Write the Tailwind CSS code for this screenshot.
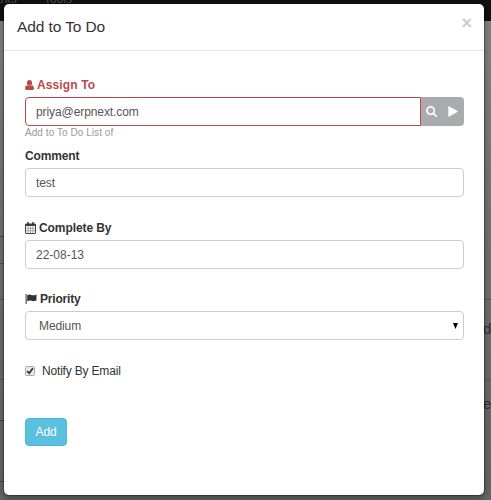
<!DOCTYPE html>
<html lang="en">
<head>
<meta charset="utf-8">
<title>Add to To Do</title>
<script src="https://cdn.jsdelivr.net/npm/@tailwindcss/browser@4"></script>
</head>
<body class="relative h-[500px] w-[491px] overflow-hidden bg-[#747372] font-['Liberation_Sans',Arial,sans-serif] text-[12px] text-[#333]">
  <!-- Dimmed page behind the dialog -->
  <div class="absolute inset-0 bg-linear-to-b from-[#868584] via-[#737271] to-[#666]">
    <div class="h-[21px] bg-[#111]"></div>
    <span class="absolute -left-[6px] -top-[8px] text-[12px] leading-[14px] text-[#4d4d4d]">arks</span>
    <span class="absolute left-[44px] -top-[8px] text-[12px] leading-[14px] text-[#4d4d4d]">Tools</span>
    <div class="absolute left-0 top-[236px] h-px w-1 bg-[#505050]"></div>
    <div class="absolute left-0 top-[263px] h-px w-1 bg-[#505050]"></div>
    <div class="absolute left-0 top-[299px] h-px w-full bg-[#5a5a5a]"></div>
    <div class="absolute left-0 top-[379px] h-px w-full bg-[#5d5d5d]"></div>
    <div class="absolute left-0 top-[420px] h-px w-1 bg-[#484848]"></div>
    <div class="absolute left-0 top-[481px] h-px w-1 bg-[#484848]"></div>
    <span class="absolute left-[483px] top-[320px] text-[15px] leading-[18px] text-[#323232]">d</span>
    <span class="absolute left-[483px] top-[395px] text-[15px] leading-[18px] text-[#323232]">e</span>
  </div>

  <div class="relative ml-1 pt-1">
    <div class="h-[491px] w-[480px] rounded-[5px] bg-white shadow-[0_3px_9px_rgba(0,0,0,0.4),0_0_0_1px_rgba(0,0,0,0.25)]">
      <header class="flex h-[47px] items-start justify-between border-b border-[#e5e5e5] pl-[13px] pr-3">
        <h1 class="pt-[12px] text-[15.5px] leading-[21px] tracking-[-0.1px] text-[#333]">Add to To Do</h1>
        <button class="pt-[9px] text-[18px] font-bold leading-[20px] text-[#ccc]" aria-label="Close">×</button>
      </header>
      <form class="pl-[21px] pr-5">
        <div class="h-[98px] pt-[26px]">
          <label class="flex h-4 items-center font-bold leading-4 text-[#b94a48]">
            <svg class="mr-[3px] h-[10px] w-[9px]" viewBox="0 0 9 10" fill="currentColor"><ellipse cx="4.5" cy="2.9" rx="2.6" ry="2.9"/><path d="M1.9 5.2Q4.5 7 7.1 5.2Q9 5.6 9 8.6Q9 10 7.6 10H1.4Q0 10 0 8.6Q0 5.6 1.9 5.2Z"/></svg>
            <span class="tracking-[0.12px]">Assign To</span>
          </label>
          <div class="mt-[4px] flex h-[29px]">
            <div class="flex w-[396px] items-center rounded-l-[4px] border border-[#b94a48] px-[10px] tracking-[-0.09px] text-[#555]">priya@erpnext.com</div>
            <div class="flex w-[43px] items-center rounded-r-[4px] bg-[#a9abac] pl-[5px] text-white">
              <svg class="h-[11px] w-[11px]" viewBox="0 0 11 11" fill="none" stroke="currentColor" stroke-width="1.7"><circle cx="4.6" cy="4.6" r="3.7"/><path d="M7.3 7.3L10.2 10.2" stroke-linecap="round"/></svg>
              <svg class="ml-[11px] h-[11px] w-[10px]" viewBox="0 0 10 11" fill="currentColor"><path d="M0.3 0.4Q0.3 0 0.8 0.2L9.5 5Q10 5.5 9.5 6L0.8 10.8Q0.3 11 0.3 10.5Z"/></svg>
            </div>
          </div>
          <p class="text-[10px] leading-[14px] tracking-[0.06px] text-[#999]">Add to To Do List of</p>
        </div>
        <div class="h-[71px]">
          <label class="block h-[19px] font-bold leading-[14px] tracking-[-0.15px]">Comment</label>
          <div class="flex h-[29px] items-center rounded-[4px] border border-[#ccc] px-[10px] tracking-[-0.1px] text-[#555]">test</div>
        </div>
        <div class="h-[71px]">
          <label class="flex h-5 items-start font-bold leading-4">
            <svg class="mr-[3px] mt-[2px] h-[12px] w-[11px]" viewBox="0 0 11 12"><rect x=".5" y="2" width="10" height="9.5" rx=".5" fill="#fff" stroke="#444"/><path d="M.5 3h10" stroke="#333" stroke-width="1.8"/><path d="M3.1 4v7M5.5 4v7M7.9 4v7M1 6.3h9M1 8.8h9" stroke="#777" stroke-width=".6"/><path d="M3 0v3M8 0v3" stroke="#333" stroke-width="1.5"/></svg>
            <span class="tracking-[-0.08px]">Complete By</span>
          </label>
          <div class="flex h-[29px] items-center rounded-[4px] border border-[#ccc] px-[10px] text-[#555]">22-08-13</div>
        </div>
        <div class="h-[71px]">
          <label class="flex h-5 items-start font-bold leading-4">
            <svg class="mr-[3px] mt-[3px] h-[10px] w-[12px]" viewBox="0 0 12 10" fill="#333"><path d="M.6 0h1v10h-1zM2.2 1.3Q4.5-.1 6.5.9Q8.3 2 11.5.5V6.2Q8.6 7.8 6.6 6.8Q4.8 5.8 2.2 7.2Z"/></svg>
            <span class="tracking-[-0.18px]">Priority</span>
          </label>
          <div class="flex h-[29px] items-center justify-between rounded-[4px] border border-[#ccc] pl-[13px] pr-[5px] tracking-[-0.1px] text-[#555]">
            <span>Medium</span>
            <svg class="h-[6px] w-[5px]" viewBox="0 0 5 6"><path d="M0 0h5L2.5 6z" fill="#000"/></svg>
          </div>
        </div>
        <label class="flex h-[17px] items-center leading-4">
          <svg class="mr-[7px] h-[10px] w-[10px]" viewBox="0 0 10 10" fill="none"><rect x=".5" y=".5" width="9" height="9" rx="1" fill="#e8e8e8" stroke="#aaa"/><path d="M2.2 5.2L4.2 7.2L7.9 2.3" stroke="#333" stroke-width="1.8"/></svg>
          <span class="tracking-[-0.18px]">Notify By Email</span>
        </label>
        <button type="button" class="mt-[39px] h-[28px] w-[42px] rounded-[4px] border border-[#46b8da] bg-[#5bc0de] text-[12px] tracking-[-0.2px] text-white">Add</button>
      </form>
    </div>
  </div>
</body>
</html>
